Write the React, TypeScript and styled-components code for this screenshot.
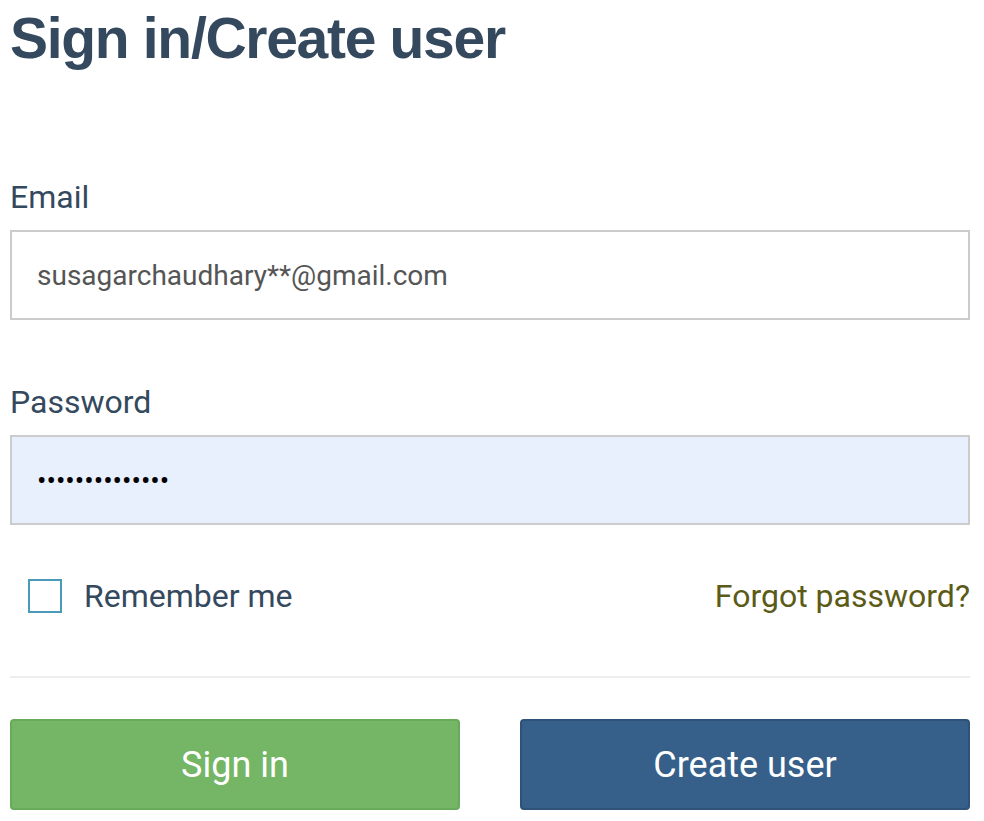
import React from 'react';
import styled, { createGlobalStyle } from 'styled-components';

const GlobalStyle = createGlobalStyle`
  body {
    margin: 0;
    background: #fff;
    font-family: Roboto, "Liberation Sans", sans-serif;
  }
`;

const Page = styled.div`
  width: 960px;
  padding: 0 10px;
`;

const Title = styled.h1`
  margin: 0;
  padding-top: 10px;
  font-family: "Liberation Sans", Arial, sans-serif;
  font-weight: bold;
  font-size: 57px;
  line-height: 57px;
  letter-spacing: -1.3px;
  color: #34495e;
`;

const Form = styled.form`
  display: flex;
  flex-direction: column;
  margin-top: 111px;
`;

const FormGroup = styled.div`
  display: flex;
  flex-direction: column;
  gap: 14px;
  & + & {
    margin-top: 63px;
  }
`;

const Label = styled.label`
  font-size: 32px;
  line-height: 38px;
  color: #34495e;
`;

const Input = styled.input<{ $autofill?: boolean }>`
  box-sizing: border-box;
  width: 960px;
  height: 90px;
  padding: 0 25px;
  border: 2px solid #cccccc;
  border-radius: 0;
  background: ${p => (p.$autofill ? '#e8f0fe' : '#fff')};
  font-family: Roboto, sans-serif;
  font-size: 28px;
  color: ${p => (p.$autofill ? '#000' : '#555')};
  outline: none;
`;

const OptionsRow = styled.div`
  display: flex;
  align-items: center;
  justify-content: space-between;
  margin-top: 54px;
  padding-left: 18px;
  height: 34px;
`;

const CheckLabel = styled.label`
  display: flex;
  align-items: center;
  gap: 22px;
  font-size: 32px;
  color: #34495e;
`;

const CheckBox = styled.span`
  box-sizing: border-box;
  width: 34px;
  height: 34px;
  border: 2px solid #4a9aba;
  background: #fff;
`;

const ForgotLink = styled.a`
  font-size: 32px;
  color: #5b5b17;
  text-decoration: none;
`;

const Divider = styled.hr`
  margin: 63px 0 0;
  border: none;
  border-top: 2px solid #eeeeee;
`;

const ButtonRow = styled.div`
  display: flex;
  justify-content: space-between;
  margin-top: 41px;
`;

const Button = styled.button<{ $variant: 'green' | 'blue' }>`
  box-sizing: border-box;
  width: 450px;
  height: 91px;
  border-radius: 4px;
  border: 2px solid ${p => (p.$variant === 'green' ? '#68ab5a' : '#2e5278')};
  background: ${p => (p.$variant === 'green' ? '#74b566' : '#365f8a')};
  color: #fff;
  font-family: Roboto, sans-serif;
  font-size: 36px;
  cursor: pointer;
`;

const App: React.FC = () => {
  return (
    <Page>
      <GlobalStyle />
      <Title>Sign in/Create user</Title>
      <Form onSubmit={e => e.preventDefault()}>
        <FormGroup>
          <Label>Email</Label>
          <Input type="text" defaultValue="susagarchaudhary**@gmail.com" />
        </FormGroup>
        <FormGroup>
          <Label>Password</Label>
          <Input type="password" defaultValue="12345678901234" $autofill />
        </FormGroup>
        <OptionsRow>
          <CheckLabel>
            <CheckBox />
            Remember me
          </CheckLabel>
          <ForgotLink href="#">Forgot password?</ForgotLink>
        </OptionsRow>
        <Divider />
        <ButtonRow>
          <Button type="button" $variant="green">Sign in</Button>
          <Button type="button" $variant="blue">Create user</Button>
        </ButtonRow>
      </Form>
    </Page>
  );
};

export default App;
